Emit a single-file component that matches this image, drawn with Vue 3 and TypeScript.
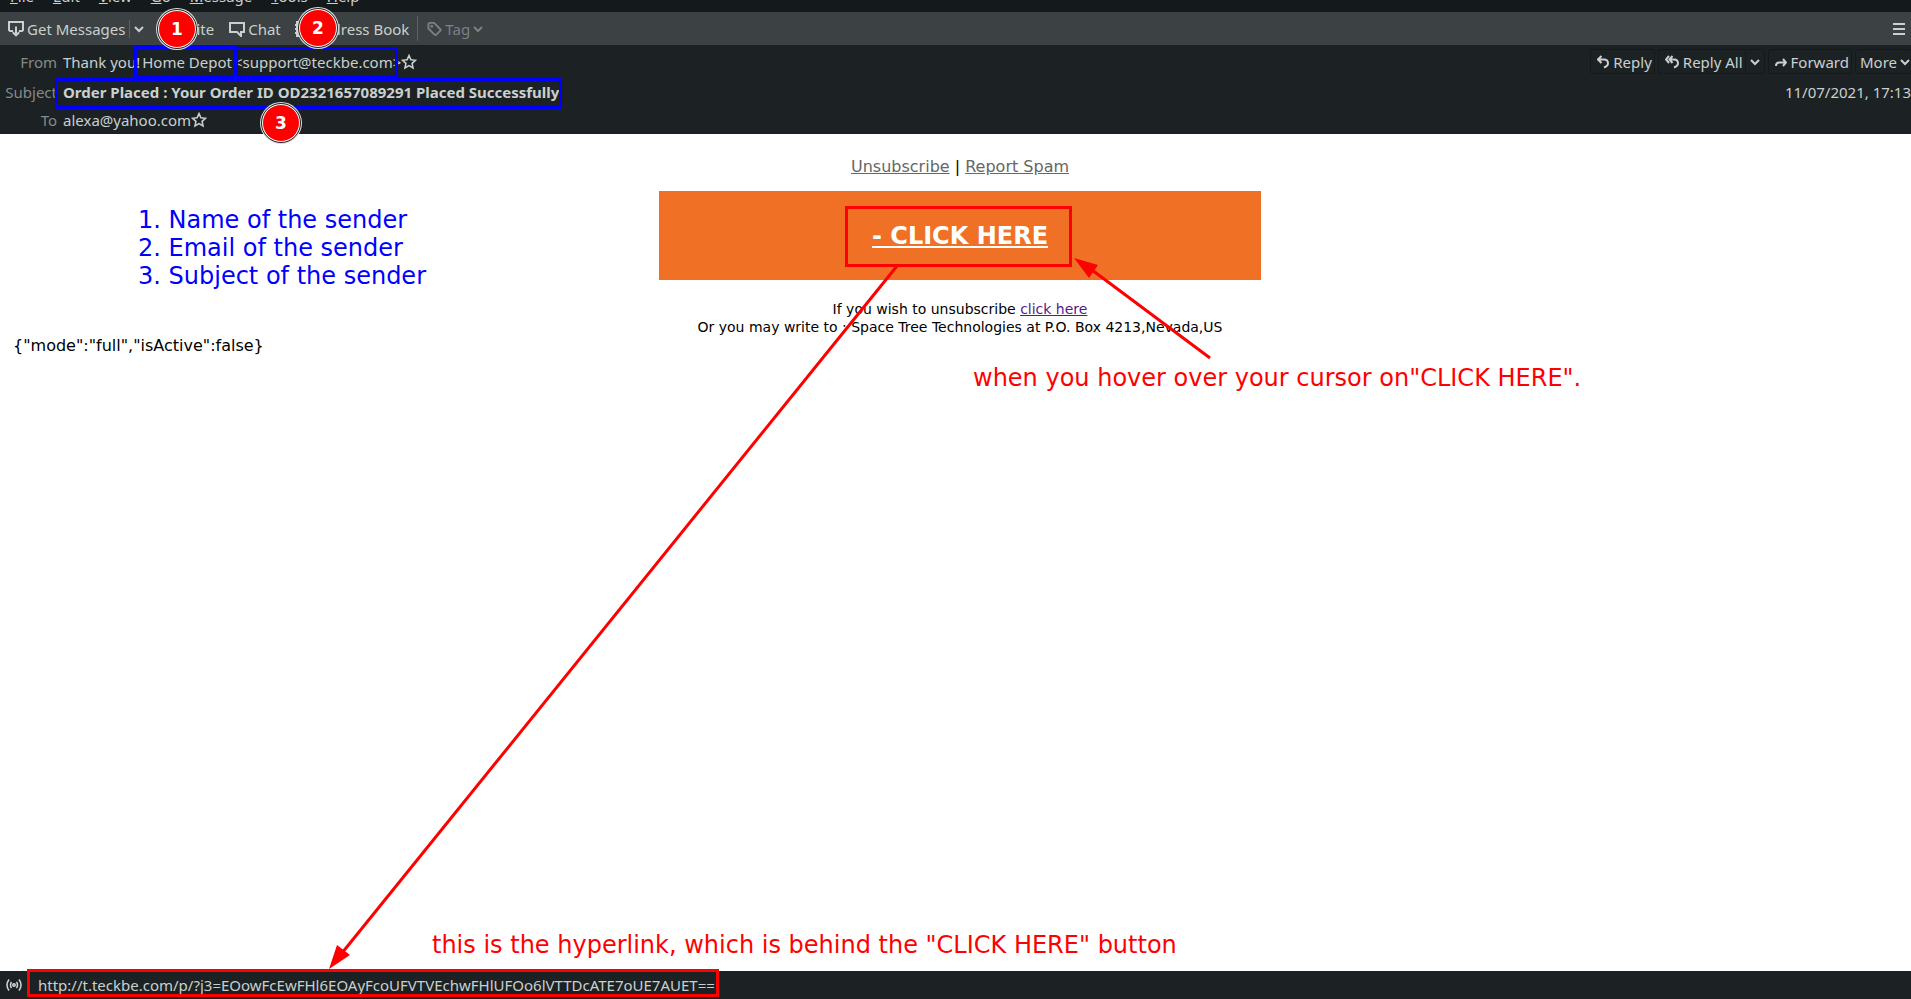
<script setup lang="ts">
interface MenuEntry {
  key: string
  rest: string
}

const menus: MenuEntry[] = [
  { key: 'F', rest: 'ile' },
  { key: 'E', rest: 'dit' },
  { key: 'V', rest: 'iew' },
  { key: 'G', rest: 'o' },
  { key: 'M', rest: 'essage' },
  { key: 'T', rest: 'ools' },
  { key: 'H', rest: 'elp' },
]

const notes: string[] = ['Name of the sender', 'Email of the sender', 'Subject of the sender']
const starPath = 'M8 1.6l1.9 4.2 4.6.5-3.4 3.1.9 4.5L8 11.6l-4 2.3.9-4.5L1.500 6.300l4.600-.5z'
</script>

<template>
  <div class="app">
    <nav class="menubar">
      <button v-for="m in menus" :key="m.key" type="button"><u>{{ m.key }}</u>{{ m.rest }}</button>
    </nav>

    <div class="toolbar">
      <button type="button" class="tool">
        <svg width="16" height="16" viewBox="0 0 16 16" class="line"><path d="M5 10H2L1 9V1h14v8l-1 1h-3M8 5.500V14M4.800 11.200L8 14.400l3.200-3.200" /></svg>
        Get Messages
      </button>
      <i class="rule short"></i>
      <button type="button" class="tool chev" aria-label="Get messages options">
        <svg width="10" height="16" viewBox="0 0 10 16" class="line"><path d="M1 6l4 4 4-4" /></svg>
      </button>
      <button type="button" class="tool write">
        <svg width="16" height="16" viewBox="0 0 16 16" class="line"><path d="M2 14l1-4 8-8 3 3-8 8z" /></svg>
        Write
      </button>
      <button type="button" class="tool chat">
        <svg width="16" height="16" viewBox="0 0 16 16" class="line"><path d="M1 2h14v9h-3v4l-4-4H1z" /></svg>
        Chat
      </button>
      <button type="button" class="tool book">
        <svg width="16" height="16" viewBox="0 0 16 16" class="line"><path d="M3 1h11v14H3zM1 4h3M1 8h3M1 12h3" /></svg>
        Address Book
      </button>
      <i class="rule"></i>
      <button type="button" class="tool tag" disabled>
        <svg width="15" height="16" viewBox="0 0 16 16" class="line"><path d="M1.500 3Q1.500 1.500 3 1.500h4.500L14 8q1 1 0 2l-4 4q-1 1-2 0L1.500 7.500z" /><circle cx="5" cy="5" r=".6" /></svg>
        Tag
        <svg width="10" height="16" viewBox="0 0 10 16" class="line"><path d="M1 6l4 4 4-4" /></svg>
      </button>
      <button type="button" class="tool burger" aria-label="Application menu">
        <svg width="12" height="14" viewBox="0 0 12 14" class="line"><path d="M0 2h12M0 7h12M0 12h12" /></svg>
      </button>
    </div>

    <header class="head">
      <div class="row from">
        <span class="label">From</span>
        <div class="sender">
          <span>Thank you!</span>
          <span>Home Depot</span>
          <span>&lt;support@teckbe.com&gt;</span>
        </div>
        <button type="button" class="star" aria-label="Add sender to address book"><svg width="16" height="16" viewBox="0 0 16 16" class="line"><path :d="starPath" /></svg></button>
        <div class="actions">
          <button type="button" class="act reply">
            <svg width="12" height="14" viewBox="0 0 12 14" class="line"><path d="M4.500 1L1 4.500 4.500 8M1.500 4.500H7Q11 4.500 11 8.500 11 11 7 12.500" /></svg>
            Reply
          </button>
          <div class="split">
            <button type="button" class="act all">
              <svg width="14" height="14" viewBox="0 0 14 14" class="line"><path d="M4 1L1 4.500 4 8M7.500 1L4.500 4.500 7.500 8M5 4.500h4q4 0 4 4 0 2.500-4 4" /></svg>
              Reply All
            </button>
            <button type="button" class="act drop" aria-label="More reply options">
              <svg width="10" height="16" viewBox="0 0 10 16" class="line"><path d="M1 6l4 4 4-4" /></svg>
            </button>
          </div>
          <button type="button" class="act forward">
            <svg width="12" height="14" viewBox="0 0 12 14" class="line"><path d="M1 11Q1 7.500 4 7.500h7M8 4l3 3.500L8 11" /></svg>
            Forward
          </button>
          <button type="button" class="act more">
            More
            <svg width="10" height="16" viewBox="0 0 10 16" class="line"><path d="M1 6l4 4 4-4" /></svg>
          </button>
        </div>
      </div>
      <div class="row subject">
        <span class="label">Subject</span>
        <strong>Order Placed : Your Order ID OD2321657089291 Placed Successfully</strong>
        <time>11/07/2021, 17:13</time>
      </div>
      <div class="row to">
        <span class="label">To</span>
        <span>alexa@yahoo.com</span>
        <button type="button" class="star" aria-label="Add recipient to address book"><svg width="16" height="16" viewBox="0 0 16 16" class="line"><path :d="starPath" /></svg></button>
      </div>
    </header>

    <main class="mail">
      <p class="links"><a href="#">Unsubscribe</a> | <a href="#">Report Spam</a></p>
      <div class="banner"><a href="#">- CLICK HERE</a></div>
      <p class="fine">If you wish to unsubscribe <a href="#">click here</a><br>Or you may write to : Space Tree Technologies at P.O. Box 4213,Nevada,US</p>
      <p class="json">{"mode":"full","isActive":false}</p>
    </main>

    <footer class="status">
      <svg width="16" height="14" viewBox="0 0 16 14" class="line"><circle cx="8" cy="7" r="1.200" /><path d="M5.500 4Q3.500 7 5.500 10M10.500 4Q12.500 7 10.500 10M3 1.500Q-1 7 3 12.500M13 1.500Q17 7 13 12.500" /></svg>
      <span>http://t.teckbe.com/p/?j3=EOowFcEwFHl6EOAyFcoUFVTVEchwFHlUFOo6lVTTDcATE7oUE7AUET==</span>
    </footer>

    <div class="marks">
      <i class="frame blue name"></i>
      <i class="frame blue email"></i>
      <i class="frame blue title"></i>
      <i class="frame red button"></i>
      <i class="frame red url"></i>
      <b class="badge one">1</b>
      <b class="badge two">2</b>
      <b class="badge three">3</b>
      <ol class="notes">
        <li v-for="(n, i) in notes" :key="n">{{ i + 1 }}. {{ n }}</li>
      </ol>
      <p class="caption hover">when you hover over your cursor on"CLICK HERE".</p>
      <p class="caption hyper">this is the hyperlink, which is behind the "CLICK HERE" button</p>
      <svg class="arrows" width="1240" height="990" viewBox="0 0 1240 990">
        <path d="M897 266L342 953M1210 358L1092 270" />
        <path class="tip" d="M329 969l8-24 13 10zM1074 258l24 7-9 13z" />
      </svg>
    </div>
  </div>
</template>

<style>
body { margin: 0; }
</style>

<style scoped>
.app {
  position: relative;
  display: flex;
  flex-direction: column;
  min-height: 100vh;
  overflow: hidden;
  background: #fff;
  color: #c9d0ce;
  font: 15px/20px "Noto Sans", sans-serif;
}
p, ol { margin: 0; padding: 0; list-style: none; }
button { padding: 0; border: 0; background: none; color: inherit; font: inherit; white-space: nowrap; }
svg { display: block; flex: none; }
.line { fill: none; stroke: currentColor; stroke-width: 2; }
.menubar {
  display: flex;
  align-items: flex-end;
  gap: 19px;
  height: 12px;
  padding-left: 10px;
  overflow: hidden;
  background: #14191b;
}
.menubar button { flex: none; margin-bottom: 6px; }
.toolbar { display: flex; align-items: center; height: 33px; padding-left: 8px; background: #3c4143; }
.tool { display: flex; align-items: center; gap: 3px; }
.rule { width: 1px; height: 25px; background: #5c6163; }
.rule.short { height: 18px; margin-left: 4px; }
.chev { margin-left: 4px; }
.write { margin-left: 13px; }
.chat { margin-left: 15px; }
.book { margin-left: 13px; }
.toolbar .rule:not(.short) { margin-left: 8px; }
.tag { margin-left: 9px; color: #7b8081; }
.burger { margin-left: auto; margin-right: 6px; }
.head { box-sizing: border-box; height: 89px; background: #1c2224; }
.row { display: flex; align-items: center; }
.label { width: 57px; margin-right: 6px; flex: none; text-align: right; color: #868a89; }
.from { height: 33px; }
.sender { display: flex; gap: 2px; }
.subject { height: 28px; }
.to { height: 27px; }
.star .line { stroke-width: 1.6; }
.actions { display: flex; gap: 3px; margin-left: auto; margin-right: -1px; }
.act {
  display: flex;
  align-items: center;
  gap: 4px;
  box-sizing: border-box;
  height: 25px;
  padding: 0 2px 0 6px;
  border: 1px solid #14191b;
  border-radius: 3px;
}
.split { display: flex; }
.all { border-radius: 3px 0 0 3px; border-right: 0; }
.drop { padding: 0 4px; border-radius: 0 3px 3px 0; }
.more { gap: 3px; padding: 0 1px 0 4px; }
time { margin-left: auto; }
.mail {
  flex: 1;
  padding: 23px 4px 0 13px;
  color: #000;
  font: 16px/20px "DejaVu Sans", sans-serif;
}
.links { text-align: center; }
.links a { color: #666; }
.banner {
  max-width: 602px;
  margin: 14px auto 20px;
  padding: 31px 0 30px;
  background: #f07126;
  text-align: center;
  font: bold 24px/28px "DejaVu Sans", sans-serif;
}
.banner a { color: #fff; }
.fine { text-align: center; font-size: 14px; line-height: 18px; }
.fine a { color: #551a8b; }
.status { display: flex; align-items: center; gap: 16px; height: 28px; padding-left: 6px; background: #1c2224; }
.status .line { stroke-width: 1.6; }

.marks { position: absolute; inset: 0; pointer-events: none; font: 24px/28px "DejaVu Sans", sans-serif; }
.marks > * { position: absolute; }
.frame { box-sizing: border-box; border: 3px solid; }
.blue { border-color: #00f; }
.red { border-color: #f00; }
.name { left: 134px; top: 46px; width: 103px; height: 33px; }
.email { left: 235px; top: 47px; width: 163px; height: 32px; }
.title { left: 55px; top: 78px; width: 507px; height: 31px; }
.button { left: 845px; top: 206px; width: 227px; height: 61px; }
.url { left: 27px; top: 969px; width: 692px; height: 28px; }
.badge {
  box-sizing: border-box;
  width: 38px;
  height: 38px;
  border: 1px solid #fff;
  border-radius: 50%;
  outline: 1px solid #222;
  box-shadow: 0 0 0 2px #ddd;
  background: #f00;
  color: #fff;
  text-align: center;
  font-size: 17px;
  line-height: 36px;
}
.one { left: 158px; top: 10px; }
.two { left: 299px; top: 9px; }
.three { left: 262px; top: 104px; }
.notes { left: 138px; top: 206px; color: #00f; }
.caption { color: #f00; white-space: nowrap; }
.hover { left: 973px; top: 364px; }
.hyper { left: 432px; top: 931px; }
.arrows { left: 0; top: 0; fill: none; stroke: #f00; stroke-width: 3; }
.tip { fill: #f00; stroke: none; }
</style>
